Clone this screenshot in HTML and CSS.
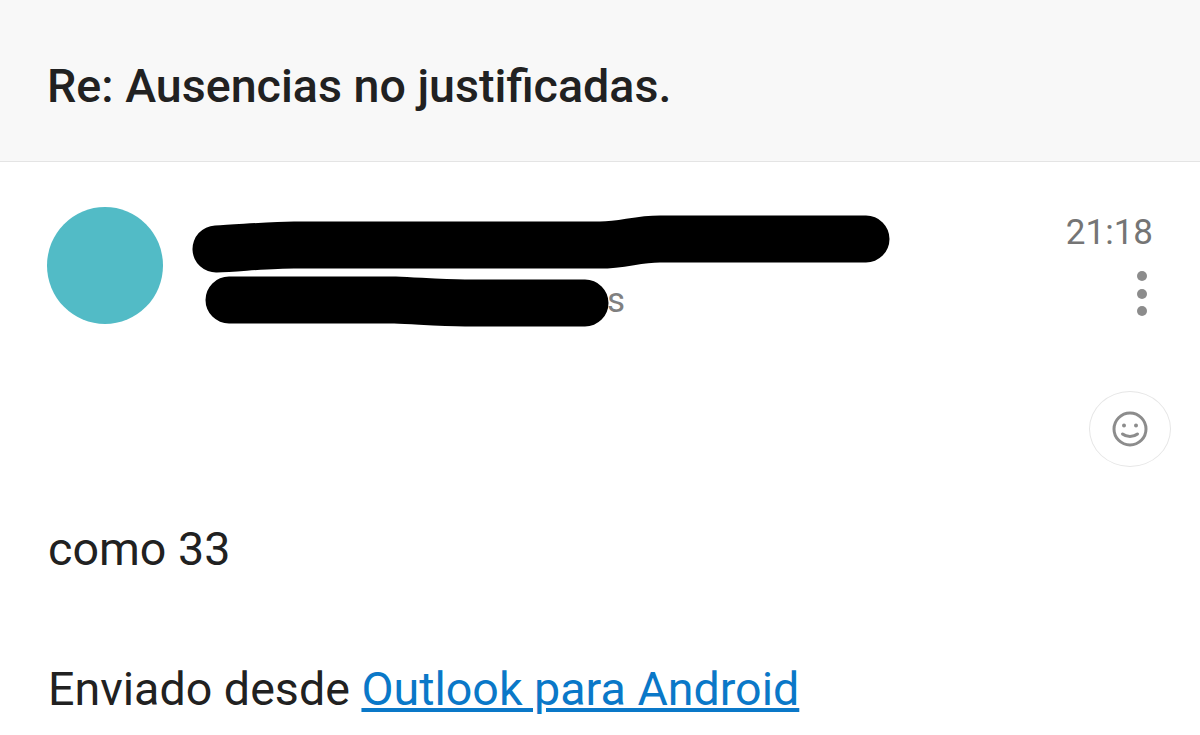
FILE: index.html
```html
<!DOCTYPE html>
<html lang="es">
<head>
  <meta charset="UTF-8" />
  <title>Re: Ausencias no justificadas.</title>
  <link rel="stylesheet" href="styles.css">
</head>
<body>
  <div class="subject-bar">
    <h1>Re: Ausencias no justificadas.</h1>
  </div>

  <div class="message">
    <div class="sender-row">
      <div class="avatar"></div>
      <div class="sender-info">
        <div class="sender-name"></div>
        <div class="sender-to">s</div>
      </div>
      <div class="meta">
        <div class="time">21:18</div>
        <div class="more">
          <span></span>
          <span></span>
          <span></span>
        </div>
      </div>
    </div>

    <div class="reaction-row">
      <button class="reaction">
        <svg width="36" height="36" viewBox="0 0 36 36" fill="none" stroke="#8c8c8c" stroke-width="3">
          <circle cx="18" cy="18" r="16" />
          <circle cx="12" cy="14.5" r="2" fill="#8c8c8c" stroke="none" />
          <circle cx="24" cy="14.5" r="2" fill="#8c8c8c" stroke="none" />
          <path d="M10.5 23c4 3.2 11 3.2 15 0" stroke-linecap="round" />
        </svg>
      </button>
    </div>

    <div class="body-text">
      <p>como 33</p>
      <p>Enviado desde <a href="#">Outlook para Android</a></p>
    </div>
  </div>

  <!-- marker scribbles over the sender details -->
  <svg class="scribble" width="1200" height="735" viewBox="0 0 1200 735" fill="none" stroke="#000" stroke-width="47" stroke-linecap="round" stroke-linejoin="round">
    <path d="M216 249C240 248 270 245 294 245L600 245C625 245 635 239 660 239L866 239" />
    <path d="M229 300L395 300C420 301 440 303 465 303L585 303" />
  </svg>
</body>
</html>
```

FILE: styles.css
```css
html {
  height: 735px;
  overflow: hidden;
}

body {
  margin: 0;
  height: 735px;
  overflow: hidden;
  position: relative;
  background: #fff;
  font-family: Roboto, sans-serif;
  color: #212121;
}

.subject-bar {
  height: 151px;
  padding: 10px 47px 0;
  display: flex;
  align-items: center;
  background-color: #f8f8f8;
  border-bottom: 1px solid #e4e4e4;
}

.subject-bar h1 {
  margin: 0;
  font-size: 46.6px;
  font-weight: 500;
}

.message {
  padding: 45px 29px 0 47px;
}

.sender-row {
  display: flex;
  align-items: flex-start;
}

.avatar {
  width: 116px;
  height: 117px;
  border-radius: 50%;
  background-color: #52bbc6;
  flex-shrink: 0;
}

.sender-info {
  flex: 1;
  padding-left: 31px;
}

.sender-name {
  height: 72px;
}

.sender-to {
  width: 431px;
  text-align: right;
  font-size: 35px;
  line-height: 44px;
  color: #808080;
}

.meta {
  padding: 4px 18px 0 0;
  display: flex;
  flex-direction: column;
  align-items: flex-end;
}

.time {
  font-size: 35px;
  line-height: 44px;
  color: #757575;
}

.more {
  display: flex;
  flex-direction: column;
  gap: 7.5px;
  margin-top: 16px;
  padding-right: 6px;
}

.more span {
  width: 10px;
  height: 10px;
  border-radius: 50%;
  background-color: #8c8c8c;
}

.reaction-row {
  display: flex;
  justify-content: flex-end;
  margin-top: 67px;
}

.reaction {
  width: 82px;
  height: 76px;
  padding: 0;
  display: flex;
  justify-content: center;
  align-items: center;
  background: #fff;
  border: 1px solid #e6e6e6;
  border-radius: 50%;
}

.body-text {
  margin-top: 56px;
  font-size: 46.6px;
  line-height: 52px;
}

.body-text p {
  margin: 0 0 88px 1px;
}

.body-text p:last-child {
  margin-bottom: 0;
}

.body-text a {
  color: #0a78c8;
}

.scribble {
  position: absolute;
  top: 0;
  left: 0;
}
```
